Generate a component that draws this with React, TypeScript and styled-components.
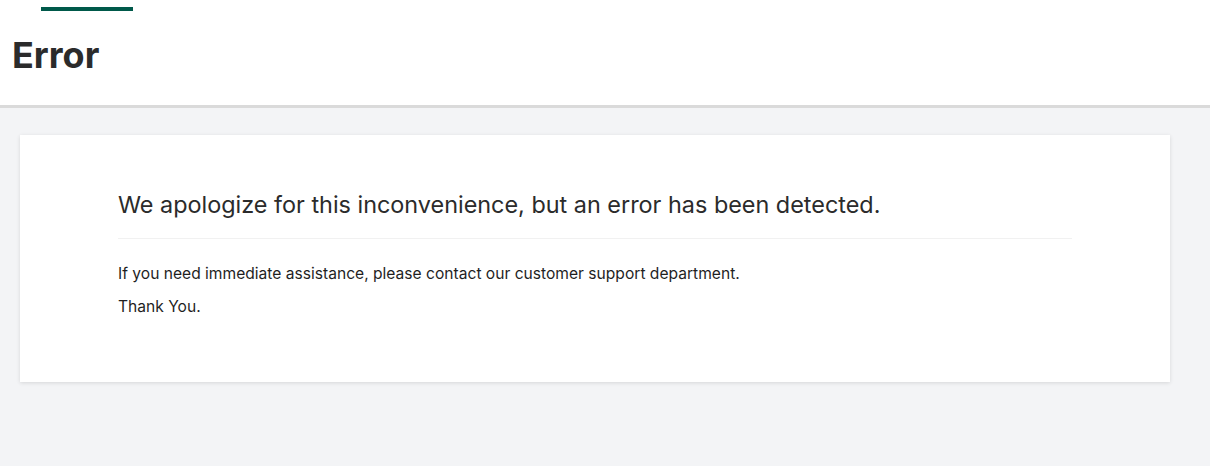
import styled, {createGlobalStyle} from 'styled-components';

const GlobalStyle = createGlobalStyle`
  html, body {
    margin: 0;
    padding: 0;
    background: #f3f4f6;
    font-family: 'Inter', 'Liberation Sans', sans-serif;
    color: #2b2b2b;
  }
`;

const Page = styled.div`
  min-height: 466px;
  background: #f3f4f6;
`;

const Header = styled.header`
  background: #ffffff;
  border-bottom: 3px solid #dadada;
  height: 108px;
  padding: 0 12px;
  box-sizing: border-box;
  display: flex;
  flex-direction: column;
`;

const Accent = styled.div`
  margin: 7px 0 0 29px;
  width: 92px;
  height: 4px;
  background: #00594a;
`;

const Title = styled.h1`
  margin: 22px 0 0;
  font-size: 36px;
  font-weight: 700;
  line-height: 44px;
  color: #2b2b2b;
`;

const Main = styled.main`
  padding: 27px 40px 0 20px;
`;

const Card = styled.section`
  background: #ffffff;
  box-shadow: 0 1px 4px rgba(0, 0, 0, 0.12);
  padding: 54px 98px 60px;
  height: 247px;
  box-sizing: border-box;
`;

const Heading = styled.h2`
  margin: 0;
  font-size: 23.4px;
  font-weight: 400;
  line-height: 32px;
  color: #2b2b2b;
  padding-bottom: 17px;
  border-bottom: 1px solid #f1f1f1;
`;

const Paragraph = styled.p`
  margin: 0;
  font-size: 15.6px;
  line-height: 33px;
  color: #1f1f1f;
  &:first-of-type {
    margin-top: 18px;
  }
`;

export default function App() {
  return (
    <Page>
      <GlobalStyle />
      <Header>
        <Accent />
        <Title>Error</Title>
      </Header>
      <Main>
        <Card>
          <Heading>We apologize for this inconvenience, but an error has been detected.</Heading>
          <Paragraph>If you need immediate assistance, please contact our customer support department.</Paragraph>
          <Paragraph>Thank You.</Paragraph>
        </Card>
      </Main>
    </Page>
  );
}
